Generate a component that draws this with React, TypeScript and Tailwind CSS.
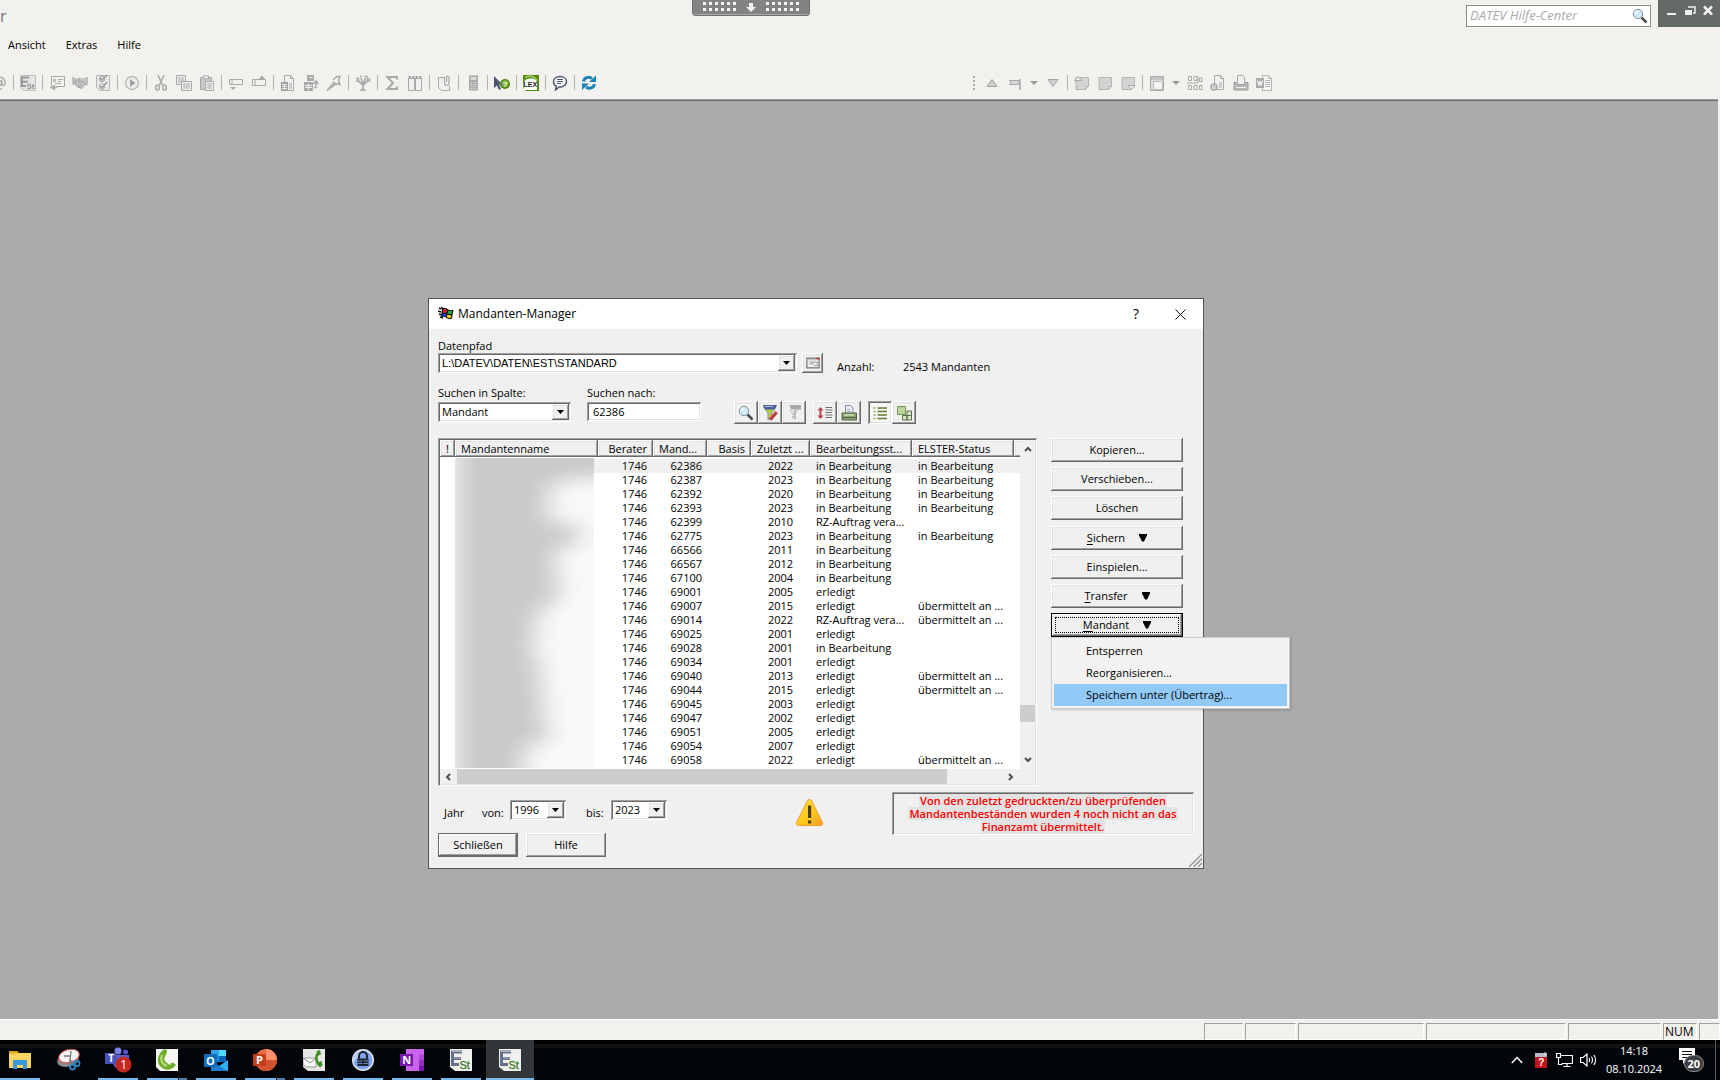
import React, { useState } from 'react';

const raised = 'bg-[#f0f0f0] shadow-[inset_-1px_-1px_#696969,inset_1px_1px_#fff,inset_-2px_-2px_#a0a0a0,inset_2px_2px_#e3e3e3]';
const sunken = 'shadow-[inset_1px_1px_#a0a0a0,inset_-1px_-1px_#fff,inset_2px_2px_#696969,inset_-2px_-2px_#e3e3e3]';

type Row = [mandant: string, jahr: string, status: string, elster: string];

const rows: Row[] = [
    ['62386', '2022', 'in Bearbeitung', 'in Bearbeitung'],
    ['62387', '2023', 'in Bearbeitung', 'in Bearbeitung'],
    ['62392', '2020', 'in Bearbeitung', 'in Bearbeitung'],
    ['62393', '2023', 'in Bearbeitung', 'in Bearbeitung'],
    ['62399', '2010', 'RZ-Auftrag vera...', ''],
    ['62775', '2023', 'in Bearbeitung', 'in Bearbeitung'],
    ['66566', '2011', 'in Bearbeitung', ''],
    ['66567', '2012', 'in Bearbeitung', ''],
    ['67100', '2004', 'in Bearbeitung', ''],
    ['69001', '2005', 'erledigt', ''],
    ['69007', '2015', 'erledigt', 'übermittelt an ...'],
    ['69014', '2022', 'RZ-Auftrag vera...', 'übermittelt an ...'],
    ['69025', '2001', 'erledigt', ''],
    ['69028', '2001', 'in Bearbeitung', ''],
    ['69034', '2001', 'erledigt', ''],
    ['69040', '2013', 'erledigt', 'übermittelt an ...'],
    ['69044', '2015', 'erledigt', 'übermittelt an ...'],
    ['69045', '2003', 'erledigt', ''],
    ['69047', '2002', 'erledigt', ''],
    ['69051', '2005', 'erledigt', ''],
    ['69054', '2007', 'erledigt', ''],
    ['69058', '2022', 'erledigt', 'übermittelt an ...'],
];

/* ---------- Icons ---------- */

const Icon: React.FC<{ children: React.ReactNode; className?: string; box?: string }> = ({
    children,
    className = 'h-4 w-4',
    box = '0 0 16 16',
}) => (
    <svg className={`shrink-0 ${className}`} viewBox={box} fill="none" aria-hidden="true">
        {children}
    </svg>
);

const G = '#a9a9a9';
const L = '#dcdbd9';

const AtIcon = () => (
    <Icon>
        <circle cx="8" cy="8" r="2.6" stroke={G} strokeWidth="1.4" />
        <path d="M10.8 5.4v4c0 2 3.4 1.7 3.4-1.6A6.3 6.3 0 1 0 11 13.6" stroke={G} strokeWidth="1.4" />
    </Icon>
);

const EstGrayIcon = () => (
    <Icon>
        <path d="M.5.5h15v15h-12l-3-3z" fill="#e6e5e3" stroke="#bdbdbd" />
        <path d="M9 2.500H2V11h4M2 6.700h6" stroke="#999" strokeWidth="2" />
        <text x="6.500" y="14" fontSize="8" fontWeight="700" fill="#8f8f8f" fontFamily="Liberation Sans">St</text>
    </Icon>
);

const FormIcon = () => (
    <Icon>
        <path d="M2.500 11V1.500h13v10H7" stroke={G} />
        <path d="M4.500 4.500h2v2h-2zM9 4.500h5M9 6.500h3M6 8.500h6" stroke={G} />
        <path d="M6 10v5l-5-2.500zM6 12.500h3" fill={G} stroke={G} strokeWidth=".6" />
    </Icon>
);

const HandshakeIcon = () => (
    <Icon>
        <path d="M1 2l3 1.500 3.500-1 4 1L15 2v8l-2 .5-3 4-2.500-1L3 10 1 9.500z" fill="#c4c4c4" />
        <path d="M1 2v7.500M15 2v8M4 4.500L3 9l4 4 1-1M7.500 3.500L6 7l2 .5 2-1.500 4 4M8 9l3 3M6 10l3 3" stroke="#9d9d9d" />
    </Icon>
);

const ChecklistIcon = () => (
    <Icon>
        <path d="M1.500.5h13v15h-10l-3-3z" fill="#ebeae8" stroke="#b5b5b5" />
        <circle cx="7" cy="4" r="2.700" stroke={G} />
        <circle cx="7" cy="11.500" r="2.700" stroke={G} />
        <path d="M5 3l2 2 5-5M5 11l2 2 5-6" stroke="#999" strokeWidth="1.500" />
    </Icon>
);

const PlayIcon = () => (
    <Icon>
        <circle cx="8" cy="8" r="6.500" fill="#eeedeb" stroke="#bcbcbc" strokeWidth="1.400" />
        <path d="M6 4l5.500 4L6 12z" fill="#a0a0a0" />
    </Icon>
);

const CutIcon = () => (
    <Icon>
        <path d="M5 0l4.500 10M11 0L6.500 10" stroke={G} strokeWidth="1.500" />
        <ellipse cx="4.500" cy="12.500" rx="1.800" ry="2.500" stroke={G} strokeWidth="1.500" />
        <ellipse cx="11.500" cy="12.500" rx="1.800" ry="2.500" stroke={G} strokeWidth="1.500" />
    </Icon>
);

const CopyIcon = () => (
    <Icon>
        <path d="M.5.5h9v9h-9z" fill="#f1f0ee" stroke={G} />
        <path d="M2 3h6M2 5h6M2 7h4" stroke={G} />
        <path d="M5.500 6.500h10v9h-10z" fill="#f1f0ee" stroke={G} />
        <path d="M7 9h7M7 11h7M7 13h7" stroke={G} />
    </Icon>
);

const PasteIcon = () => (
    <Icon>
        <path d="M1.500 2.500h11v12h-11z" fill="#c8c8c8" stroke={G} />
        <path d="M4.500.8h5v3h-5z" fill="#eee" stroke={G} />
        <path d="M6.500 6.500h8v9h-8z" fill="#f1f0ee" stroke={G} />
        <path d="M8 9h5M8 11h5M8 13h5" stroke={G} />
    </Icon>
);

const RowDownIcon = () => (
    <Icon>
        <path d="M1.500 4.500h13v5h-13z" stroke={G} />
        <path d="M4 5v4" stroke={G} />
        <path d="M2 12h6l-3 3z" fill={G} />
    </Icon>
);

const RowUpIcon = () => (
    <Icon>
        <path d="M1.500 4.500h13v6h-13z" stroke={G} />
        <path d="M4 5v5" stroke={G} />
        <path d="M8 4h6l-3-3.500z" fill={G} />
    </Icon>
);

const DocCalcIcon = () => (
    <Icon>
        <path d="M4.500.5h6l3 3v12h-9z" fill="#f1f0ee" stroke={G} />
        <path d="M10.500.5v3h3M9 9h3M9 11h3M9 13h3" stroke={G} />
        <path d="M1 7h7v9H1z" fill="#9f9f9f" />
        <path d="M2 9.500h5M2 11.500h5M2 13.500h5M4.500 9v6" stroke="#f1f0ee" />
    </Icon>
);

const DocTransferIcon = () => (
    <Icon>
        <path d="M1 7h9v9H1zM4 0h7v6H4z" fill={G} />
        <path d="M2 10.500h7M2 12.500h7M5.500 9v6M6 2.500h4" stroke="#f1f0ee" />
        <path d="M11 12.500h2V6M10.500 9L13 6l2.500 3" stroke={G} strokeWidth="1.500" />
    </Icon>
);

const WrenchIcon = () => (
    <Icon>
        <path d="M1 15.500l7-8 2 1.500z" fill="#c4c4c4" stroke={G} strokeWidth="1.300" />
        <path d="M7 5l4-3.500h3L12.500 5 14 9.500l-2-1-2.500 1" stroke={G} strokeWidth="1.500" />
    </Icon>
);

const TreeIcon = () => (
    <Icon>
        <path d="M8 16V8M8 10L3.500 6M8 10l5-4.500M8 8L6 3M9 8l1.500-5M3.500 6H1M3.500 6L3 2.500M13 5.500L12.500 2M13 5.500l2.500.5M5 15h6" stroke={G} strokeWidth="1.700" />
        <path d="M5 1.500h2M9.500 1.500h3M1 3.500h2M13.500 4h2" stroke={G} strokeWidth="1.500" />
    </Icon>
);

const SigmaIcon = () => (
    <Icon>
        <path d="M13 4.500V2H3.500L9 8l-5.500 6H13v-2.500" stroke={G} strokeWidth="2" />
    </Icon>
);

const ColumnsIcon = () => (
    <Icon>
        <path d="M1.500 3.500h6v12h-6zM8.500 3.500h6v12h-6z" fill="#f1f0ee" stroke={G} />
        <path d="M1.500 1h2.500v3H1.500zM5 1h2.500v3H5zM8.500 1H11v3H8.500zM12 1h2.500v3H12z" fill={G} />
    </Icon>
);

const ClipIcon = () => (
    <Icon>
        <path d="M8 2.500H2.500v10l3 3h8V11" fill="#f1f0ee" stroke={G} />
        <path d="M8.500 2v6a2 2 0 0 0 4.500 0V2a1.500 1.500 0 0 0-2.500 0v5" stroke={G} strokeWidth="1.200" />
    </Icon>
);

const CalculatorIcon = () => (
    <Icon>
        <path d="M4 .5h9v15H4z" fill={G} />
        <path d="M5.500 2h6v3h-6z" fill={L} />
        <path d="M5.500 7.500h6M5.500 9.500h6M5.500 11.500h6M5.500 13.500h6" stroke={L} strokeDasharray="1.500 .8" />
    </Icon>
);

const HelpCursorIcon = () => (
    <Icon>
        <path d="M0 1v12l3-2.500L5 15l2-1-2-4.500h3.500z" fill="#4d5470" />
        <circle cx="11" cy="9" r="5" fill="#4f8315" />
        <circle cx="11" cy="8.500" r="3.500" fill="#7fae38" />
        <text x="8.800" y="12" fontSize="8" fontWeight="700" fill="#fff" fontFamily="Liberation Sans">?</text>
    </Icon>
);

const LexIcon = () => (
    <Icon>
        <path d="M0 0h16v16H3l-3-3z" fill="#4f8a10" />
        <path d="M1 15C-.5 6 2 3.500 8 3.500S14.500 7 14 15z" fill="#fff" />
        <path d="M2 2.500Q10-1 14.500 6" stroke="#a4cc60" strokeWidth="1.500" />
        <text x=".5" y="12" fontSize="7" fontWeight="700" fill="#222" fontFamily="Liberation Sans">LEX</text>
    </Icon>
);

const ChatIcon = () => (
    <Icon>
        <path d="M8 1.500c4 0 6.500 2.200 6.500 5S12 12 8 12H7l-3.500 3 .8-3.800C2.500 10.300 1.500 8.500 1.500 6.500c0-2.800 2.500-5 6.500-5z" fill="#f8f8fa" stroke="#4d5470" strokeWidth="1.400" />
        <path d="M5 4.500h6M5 6.500h6M5 8.500h4" stroke="#4d5470" />
    </Icon>
);

const RefreshIcon = () => (
    <Icon>
        <path d="M2.500 6.500c.8-4 5-5.500 8.500-3" stroke="#1c83b8" strokeWidth="3" />
        <path d="M8 7h7V.5z" fill="#1c83b8" />
        <path d="M13.500 9c-.8 4-5 5.500-8.500 3" stroke="#1c83b8" strokeWidth="3" />
        <path d="M8 8.500H1V15z" fill="#1c83b8" />
    </Icon>
);

const UpIcon = () => (
    <Icon><path d="M3 11.500h10L8 4.500z" fill="#d0d0d0" stroke="#a5a5a5" /></Icon>
);
const DownIcon = () => (
    <Icon><path d="M3 4.500h10L8 11.500z" fill="#d0d0d0" stroke="#a5a5a5" /></Icon>
);
const FlagIcon = () => (
    <Icon>
        <path d="M13 4v11" stroke={G} strokeWidth="1.500" />
        <path d="M2 5.500h10v4H2L4.500 7.500z" fill="#d6d6d6" stroke={G} />
    </Icon>
);
const NoteIcon: React.FC<{ mark?: 'up' | 'down' }> = ({ mark }) => (
    <Icon>
        <path d="M2 2.500h12.500v9l-3 3H2z" fill="#d4d3d1" stroke="#b5b5b5" />
        <path d="M11.500 14.500v-3h3z" fill="#f0f0f0" stroke="#b5b5b5" />
        {mark === 'up' && <path d="M.5 5.500h7L4 1.500z" fill="#eee" stroke={G} />}
        {mark === 'down' && <path d="M8 10.500h7L11.500 14.500z" fill="#eee" stroke={G} />}
    </Icon>
);
const WindowPageIcon = () => (
    <Icon>
        <path d="M1.500 1.500h13v14h-13z" fill="#dddcda" stroke={G} />
        <path d="M2 3.500h12" stroke="#c4c4c4" strokeWidth="3" />
        <path d="M4.500 6.500h7l2 2v6h-9z" fill="#f5f4f2" stroke="#bbb" />
    </Icon>
);
const GridIcon = () => (
    <Icon>
        <path d="M1.500 1.500h3v4h-3zM7 1.500h3v4H7zM12.500 3h2.500v3.500h-2.500zM1.500 10.500h3v4h-3zM7 10.500h3v4H7zM12.500 10.500h2.500v4h-2.500z" stroke={G} />
        <path d="M0 8h11V1" stroke={G} />
    </Icon>
);
const DocPreviewIcon = () => (
    <Icon>
        <path d="M4.500.5h6l3 3v11h-9z" fill="#f1f0ee" stroke={G} />
        <path d="M10.500.5v3h3M9 8h3M9 10h3M9 12h3" stroke={G} />
        <circle cx="4" cy="12" r="3" fill="#ddd" stroke={G} strokeWidth="1.500" />
        <path d="M4 10.500V12h1.500" stroke={G} />
    </Icon>
);
const PrinterGrayIcon = () => (
    <Icon>
        <path d="M4.500 8V.5h5l2 2V8" fill="#f1f0ee" stroke={G} />
        <path d="M1 7.500h3v2h8v-2h3v7.500H1z" fill="#b8b8b8" stroke="#9d9d9d" />
        <path d="M3 12.500h10" stroke="#eee" />
    </Icon>
);
const WordGrayIcon = () => (
    <Icon>
        <path d="M6.500.5h6l3 3v12h-9z" fill="#f6f5f3" stroke="#b5b5b5" />
        <path d="M9 5.500h5M9 7.500h5M9 9.500h5M9 11.500h5M12.500.5v3h3" stroke="#b5b5b5" />
        <path d="M0 3h8v10H0z" fill={G} />
        <path d="M1.500 5.500l1.300 5L4 6l1.200 4.500 1.300-5" stroke="#fff" />
    </Icon>
);

const MagnifierIcon = () => (
    <Icon>
        <path d="M9.500 9.500l5 5" stroke="#4b4b4b" strokeWidth="2.500" />
        <circle cx="6" cy="6" r="4.700" fill="#d4ecf9" stroke="#7d8fa0" />
        <path d="M3.500 6A2.500 2.500 0 0 1 6 3.500" stroke="#fff" strokeWidth="1.500" />
    </Icon>
);
const FilterEditIcon = () => (
    <Icon>
        <path d="M1.500 2h12L9.500 8v5L6 15V8z" fill="#b9ce3c" stroke="#8b95a5" />
        <path d="M1 0h14l-2 4.500H3z" fill="#4b5f96" />
        <path d="M3 1.500h8" stroke="#aebde0" />
        <path d="M14.500 7L8 14.500" stroke="#b33a3e" strokeWidth="3.500" />
        <path d="M13.500 6.500L7 13.500" stroke="#e49a9a" />
    </Icon>
);
const FilterGrayIcon = () => (
    <Icon>
        <path d="M3.500 0H15v4.500H5z" fill="#a6a6a6" />
        <path d="M8 5h4l-2 3v7L8 13.500z" fill="#bcbcbc" />
        <path d="M3 5l3.500 3.500V14M5 4.500L7.500 8v6" stroke="#b4b4b4" strokeDasharray="1.500 1" />
    </Icon>
);
const SortIcon = () => (
    <Icon>
        <path d="M3.500 3v10" stroke="#b8464c" strokeWidth="2" />
        <path d="M.5 5.500l3-3.500 3 3.500zM.5 10.500l3 3.500 3-3.500z" fill="#b8464c" />
        <path d="M8.500 2.500H15M8.500 5h7M8.500 7.500H15M8.500 10h7M8.500 12.500H15" stroke="#707070" />
    </Icon>
);
const PrinterIcon = () => (
    <Icon>
        <path d="M4.500 8V.5h5l2.500 2.500v5" fill="#eef0f6" stroke="#7d8aa5" />
        <path d="M6 4.500h3M6 6.500h4" stroke="#98a4bb" />
        <path d="M1 8h14.500v7H1z" fill="#8da577" stroke="#4d633d" />
        <path d="M3 10h10" stroke="#cfe0bd" strokeWidth="1.500" />
        <path d="M1 12.500h14" stroke="#4d633d" />
    </Icon>
);
const ListIcon = () => (
    <Icon>
        <path d="M5.500 3H15M5.500 6.500H15M5.500 10H15M5.500 13.500H15" stroke="#617f32" strokeWidth="1.700" />
        <path d="M1.500 3h2M1.500 6.500h2M1.500 10h2M1.500 13.500h2" stroke="#8dae56" strokeWidth="1.700" />
    </Icon>
);
const TilesIcon = () => (
    <Icon>
        <path d="M1.500 1.500h8v8h-8z" fill="#bcd69a" stroke="#77945a" />
        <path d="M6.500 10.500h4.500v4.500H6.500zM11 10.500h4.500v4.500H11zM11 6h4.500v4.500H11z" fill="#d8e5c4" stroke="#596f49" />
    </Icon>
);
const PathIcon = () => (
    <Icon className="h-[14px] w-[14px]">
        <path d="M1 2.500h14v11H1z" fill="#f1f1f1" stroke="#777" strokeWidth="1.400" />
        <path d="M2 4.200h10" stroke="#c4c4c4" strokeWidth="1.500" />
        <path d="M12 2h3.500v2H12z" fill="#c8323c" />
        <path d="M4 7h9v4M4 9h5M9 11h4" stroke="#8e8e8e" />
    </Icon>
);

const WindowsFlagIcon = () => (
    <Icon>
        <path d="M1 2l2 1M0 5l3 1M1 8l3 1M2 11l3 1M3 1.500l2 1" stroke="#111" strokeWidth="1.500" />
        <path d="M4 2.500Q7 1 9.500 3t6 .5l-1.500 9q-3 1.500-5.500-.5T3 11.500z" fill="#111" />
        <path d="M5.500 3.500Q7.500 2.500 9 4l-.6 3Q6.500 6 4.800 6.700z" fill="#e8202a" />
        <path d="M10.200 4.500q2 1 4 .3l-.6 3q-2 .6-4-.4z" fill="#22a83a" />
        <path d="M4.600 7.800q2-.8 3.700.3l-.5 2.700q-2-1-3.700-.2z" fill="#2238d8" />
        <path d="M9.400 8.600q2 1 4 .4l-.5 2.700q-2 .6-4-.4z" fill="#f5d516" />
    </Icon>
);

const WarningIcon = () => (
    <Icon className="h-[29px] w-[29px]" box="0 0 29 29">
        <defs>
            <linearGradient id="warn" x1="0" y1="0" x2="1" y2="1">
                <stop offset="0" stopColor="#ffe14a" />
                <stop offset=".55" stopColor="#fdca1a" />
                <stop offset="1" stopColor="#f29a2c" />
            </linearGradient>
        </defs>
        <path d="M14.500 1.500c1 0 1.700.5 2.200 1.400l10.800 21.600c.7 1.600-.2 3-2 3h-22c-1.800 0-2.700-1.400-2-3L12.300 2.900c.5-.9 1.200-1.400 2.200-1.400z" fill="url(#warn)" stroke="#f0a030" />
        <path d="M13 7.500h3.200v12.500H13zM13 22.500h3.200v3H13z" fill="#4f4208" />
    </Icon>
);

const DropArrow = () => (
    <Icon className="h-1 w-[7px]" box="0 0 7 4"><path d="M0 0h7L3.500 4z" fill="#000" /></Icon>
);
const GrayDrop = () => (
    <button type="button" aria-label="Auswahl" className="flex w-[15px] items-center justify-center">
        <Icon className="h-1 w-2" box="0 0 8 4"><path d="M0 0h8L4 4z" fill="#999" /></Icon>
    </button>
);
const BlackDrop = () => (
    <Icon className="ml-[14px] h-2 w-2" box="0 0 8 8"><path d="M0 0h8v1.500L5 7.500H3L0 1.500z" fill="#000" /></Icon>
);
const Chevron: React.FC<{ d: string }> = ({ d }) => (
    <Icon className="h-2 w-2" box="0 0 8 8"><path d={d} stroke="#505050" strokeWidth="2" /></Icon>
);
const Dots = () => (
    <Icon className="h-[9px] w-[33px]" box="0 0 33 9">
        <path d="M0 1.500h33M0 7.500h33" stroke="#f5f5f5" strokeWidth="3" strokeDasharray="3 3" />
    </Icon>
);

/* ---------- Small parts ---------- */

const ToolButton: React.FC<{ label: string; children: React.ReactNode }> = ({ label, children }) => (
    <button type="button" aria-label={label} className="flex w-[23px] shrink-0 items-center justify-center">
        {children}
    </button>
);

const Sep = () => <span className="mr-[2px] ml-[3px] h-[15px] w-px shrink-0 bg-[#b4b3b1]" />;

interface ComboProps {
    id: string;
    options: string[];
    className: string;
}

const Combo: React.FC<ComboProps> = ({ id, options, className }) => (
    <div className={`relative flex h-5 bg-white p-[2px] ${sunken} ${className}`}>
        <select id={id} className="min-w-0 flex-1 appearance-none bg-white pl-[2px] leading-4 outline-none">
            {options.map((o) => (
                <option key={o}>{o}</option>
            ))}
        </select>
        <span className={`pointer-events-none flex w-[17px] items-center justify-center ${raised}`}>
            <DropArrow />
        </span>
    </div>
);

const IconButton: React.FC<{ label: string; pressed?: boolean; children: React.ReactNode }> = ({ label, pressed, children }) => (
    <button
        type="button"
        aria-label={label}
        className={`flex h-[23px] w-6 items-center justify-center ${pressed ? `bg-[#f7f7f7] ${sunken}` : raised}`}
    >
        {children}
    </button>
);

const SideButton: React.FC<{ text: string; hotkey?: boolean }> = ({ text, hotkey }) => (
    <button type="button" className={`flex h-6 w-full items-center justify-center ${raised}`}>
        {hotkey ? (
            <>
                <span><u className="underline-offset-2">{text[0]}</u>{text.slice(1)}</span>
                <BlackDrop />
            </>
        ) : (
            text
        )}
    </button>
);

/* ---------- Application frame ---------- */

const TopBar = () => (
    <header className="relative shrink-0 bg-[#f3f1ed]">
        <div className="absolute top-0 left-[692px] flex h-4 w-[118px] items-start justify-center gap-[10px] rounded-b border border-t-0 border-[#6f6f6f] bg-[#838383] pt-[2px] shadow-[inset_0_-1px_#aaa]">
            <Dots />
            <Icon className="mt-px h-[9px] w-[10px]" box="0 0 10 9"><path d="M3 0h4v4h3L5 9 0 4h3z" fill="#f2f2f2" /></Icon>
            <Dots />
        </div>
        <div className="flex h-[30px] items-start justify-between">
            <span className="mt-1 text-base leading-6 text-[#73737d]">r</span>
            <div className="flex">
                <div className="mt-[5px] mr-[7px] flex h-[22px] w-[185px] items-center border border-[#8c8c8c] bg-white pr-[2px] pl-[3px]">
                    <input
                        type="text"
                        aria-label="DATEV Hilfe-Center"
                        placeholder="DATEV Hilfe-Center"
                        className="min-w-0 flex-1 text-[13px] italic outline-none placeholder:text-[#a9a9a9]"
                    />
                    <MagnifierIcon />
                </div>
                <div className="flex h-[27px] w-[62px] justify-between bg-[#646b67] pt-[5px] pr-[6px] pl-[8px]">
                    <button type="button" aria-label="Minimieren" className="flex h-3 w-3">
                        <Icon className="h-3 w-3" box="0 0 12 12"><path d="M1 9h9" stroke="#f0f0f0" strokeWidth="2" /></Icon>
                    </button>
                    <button type="button" aria-label="Wiederherstellen" className="flex h-3 w-3">
                        <Icon className="h-3 w-3" box="0 0 12 12">
                            <path d="M4 2h7v6H9" stroke="#f0f0f0" strokeWidth="1.500" />
                            <path d="M1 5h7v5H1z" fill="#f0f0f0" />
                        </Icon>
                    </button>
                    <button type="button" aria-label="Schließen" className="flex h-3 w-3">
                        <Icon className="h-3 w-3" box="0 0 12 12"><path d="M2 1.500l8 8M10 1.500l-8 8" stroke="#f0f0f0" strokeWidth="2.500" /></Icon>
                    </button>
                </div>
            </div>
        </div>
        <nav className="flex h-[30px] items-center gap-5 pl-2 text-[11px]">
            <button type="button">Ansicht</button>
            <button type="button">Extras</button>
            <button type="button">Hilfe</button>
        </nav>
        <div className="mt-[7px] mb-px flex h-[31px] items-center overflow-hidden">
            <div className="-ml-[13px] flex items-center">
                <ToolButton label="E-Mail"><AtIcon /></ToolButton>
                <Sep />
                <ToolButton label="ESt"><EstGrayIcon /></ToolButton>
                <Sep />
                <ToolButton label="Formular"><FormIcon /></ToolButton>
                <ToolButton label="Übergabe"><HandshakeIcon /></ToolButton>
                <ToolButton label="Prüfen"><ChecklistIcon /></ToolButton>
                <Sep />
                <ToolButton label="Start"><PlayIcon /></ToolButton>
                <Sep />
                <ToolButton label="Ausschneiden"><CutIcon /></ToolButton>
                <ToolButton label="Kopieren"><CopyIcon /></ToolButton>
                <ToolButton label="Einfügen"><PasteIcon /></ToolButton>
                <Sep />
                <ToolButton label="Zeile darunter"><RowDownIcon /></ToolButton>
                <ToolButton label="Zeile darüber"><RowUpIcon /></ToolButton>
                <Sep />
                <ToolButton label="Berechnung"><DocCalcIcon /></ToolButton>
                <ToolButton label="Übernahme"><DocTransferIcon /></ToolButton>
                <ToolButton label="Werkzeug"><WrenchIcon /></ToolButton>
                <Sep />
                <ToolButton label="Baum"><TreeIcon /></ToolButton>
                <Sep />
                <ToolButton label="Summe"><SigmaIcon /></ToolButton>
                <ToolButton label="Vergleich"><ColumnsIcon /></ToolButton>
                <Sep />
                <ToolButton label="Anlage"><ClipIcon /></ToolButton>
                <Sep />
                <ToolButton label="Rechner"><CalculatorIcon /></ToolButton>
                <Sep />
                <ToolButton label="Direkthilfe"><HelpCursorIcon /></ToolButton>
                <Sep />
                <ToolButton label="LEXinform"><LexIcon /></ToolButton>
                <Sep />
                <ToolButton label="Kommentar"><ChatIcon /></ToolButton>
                <Sep />
                <ToolButton label="Aktualisieren"><RefreshIcon /></ToolButton>
            </div>
            <div className="ml-[373px] flex items-center">
                <span className="mr-[5px] h-[14px] border-l-2 border-dotted border-[#aaa]" />
                <ToolButton label="Vorheriges"><UpIcon /></ToolButton>
                <ToolButton label="Markierung"><FlagIcon /></ToolButton>
                <GrayDrop />
                <ToolButton label="Nächstes"><DownIcon /></ToolButton>
                <Sep />
                <ToolButton label="Notiz zurück"><NoteIcon mark="up" /></ToolButton>
                <ToolButton label="Notiz"><NoteIcon /></ToolButton>
                <ToolButton label="Notiz vor"><NoteIcon mark="down" /></ToolButton>
                <Sep />
                <ToolButton label="Ansicht"><WindowPageIcon /></ToolButton>
                <GrayDrop />
                <ToolButton label="Übersicht"><GridIcon /></ToolButton>
                <ToolButton label="Vorschau"><DocPreviewIcon /></ToolButton>
                <ToolButton label="Drucken"><PrinterGrayIcon /></ToolButton>
                <ToolButton label="Word"><WordGrayIcon /></ToolButton>
            </div>
        </div>
    </header>
);

const StatusBar = () => (
    <div className="flex h-[21px] shrink-0 justify-end gap-[2px] border-t border-white bg-[#f3f1ed] pt-[3px] text-xs">
        {['w-[39px]', 'w-[51px]', 'w-[126px]', 'w-[140px]', 'w-[93px]', 'w-[34px]', 'w-[21px]'].map((w, i) => (
            <div
                key={w}
                className={`${w} flex items-center border border-t-[#a0a0a0] border-r-white border-b-white border-l-[#a0a0a0] pl-px leading-4`}
            >
                {i === 5 && 'NUM'}
            </div>
        ))}
    </div>
);

/* ---------- Mandanten-Manager ---------- */

const columns = [
    { title: '!', width: 'w-[15px]', cls: 'text-center' },
    { title: 'Mandantenname', width: 'w-[143px]', cls: 'pl-[6px] text-left' },
    { title: 'Berater', width: 'w-[55px]', cls: 'pr-[6px] text-right' },
    { title: 'Mand...', width: 'w-[54px]', cls: 'pl-[6px] text-left' },
    { title: 'Basis', width: 'w-[44px]', cls: 'pr-[6px] text-right' },
    { title: 'Zuletzt ...', width: 'w-[59px]', cls: 'pl-[6px] text-left' },
    { title: 'Bearbeitungsst...', width: 'w-[102px]', cls: 'pl-[6px] text-left' },
    { title: 'ELSTER-Status', width: 'w-[102px]', cls: 'pl-[6px] text-left' },
    { title: '', width: 'w-auto', cls: '-mr-1' },
];

const NameMask = () => (
    <svg className="absolute top-[18px] left-[15px] h-[310px] w-[139px]" viewBox="0 0 139 310" aria-hidden="true">
        <defs>
            <filter id="soft" x="-30%" y="-20%" width="160%" height="140%">
                <feGaussianBlur stdDeviation="13 9" />
            </filter>
        </defs>
        <rect width="139" height="310" fill="#f9f9f9" />
        <path
            d="M2-30H180V14L96 24 90 62 124 68 124 84 98 92 104 142 82 152 76 195 84 205 88 262 96 280 70 288 64 340H2z"
            fill="#cac8c9"
            filter="url(#soft)"
        />
        <path d="M-20 314h180" stroke="#aaa" strokeWidth="10" filter="url(#soft)" />
    </svg>
);

const ClientTable = () => (
    <div className={`flex h-[348px] w-[599px] shrink-0 flex-col bg-white p-[2px] ${sunken}`}>
        <div className="flex flex-1">
            <div className="relative flex-1 overflow-hidden">
                <table className="w-full table-fixed border-collapse">
                    <thead>
                        <tr>
                            {columns.map((c) => (
                                <th key={c.title} className={`${c.width} p-0 pb-[2px] font-normal`}>
                                    <div className={`h-[17px] truncate leading-[17px] ${raised} ${c.cls}`}>{c.title}</div>
                                </th>
                            ))}
                        </tr>
                    </thead>
                    <tbody className="leading-[14px]">
                        {rows.map(([mandant, jahr, status, elster], i) => (
                            <tr key={mandant} className={i === 0 ? 'h-[14px] bg-[#f0f0f0]' : 'h-[14px]'}>
                                <td className="bg-white p-0" />
                                <td className="p-0" />
                                <td className="p-0 pr-[6px] text-right">1746</td>
                                <td className="p-0 pr-[5px] text-right">{mandant}</td>
                                <td className="p-0" />
                                <td className="p-0 text-center">{jahr}</td>
                                <td className="p-0 pl-[6px] whitespace-nowrap">{status}</td>
                                <td className="p-0 pl-[6px] whitespace-nowrap">{elster}</td>
                                <td className="p-0" />
                            </tr>
                        ))}
                    </tbody>
                </table>
                <NameMask />
            </div>
            <div className="flex w-[15px] flex-col items-center bg-[#f0f0f0] py-[5px]">
                <Chevron d="M1 6l3-3 3 3" />
                <div className="mt-[252px] h-[17px] w-full bg-[#cdcdcd]" />
                <div className="flex-1" />
                <Chevron d="M1 2l3 3 3-3" />
            </div>
        </div>
        <div className="flex h-[15px] items-center bg-[#f0f0f0] pr-5 pl-1">
            <Chevron d="M6 1L3 4l3 3" />
            <div className="ml-[5px] h-full w-[490px] bg-[#cdcdcd]" />
            <div className="flex-1" />
            <Chevron d="M2 1l3 3-3 3" />
        </div>
    </div>
);

const MandantMenu = () => {
    const [active, setActive] = useState(2);
    return (
        <div role="menu" className="absolute top-full left-0 z-10 w-[239px] border border-[#ccc] bg-[#f2f2f2] p-[2px] shadow-[1px_1px_2px_#0003]">
            {['Entsperren', 'Reorganisieren...', 'Speichern unter (Übertrag)...'].map((item, i) => (
                <button
                    key={item}
                    type="button"
                    role="menuitem"
                    onMouseEnter={() => setActive(i)}
                    className={`block h-[22px] w-full pl-8 text-left ${active === i ? 'bg-[#91c9f7]' : ''}`}
                >
                    {item}
                </button>
            ))}
        </div>
    );
};

const notice = [
    'Von den zuletzt gedruckten/zu überprüfenden',
    'Mandantenbeständen wurden 4 noch nicht an das',
    'Finanzamt übermittelt.',
];

const MandantenManager = () => {
    const [search, setSearch] = useState('62386');

    return (
        <section
            role="dialog"
            aria-label="Mandanten-Manager"
            className="absolute top-[198px] left-[428px] w-[776px] border border-[#555] bg-[#f0f0f0] text-[11px] leading-[14px]"
        >
            <div className="flex h-[30px] items-center bg-white pr-[17px] pl-[9px]">
                <WindowsFlagIcon />
                <h1 className="ml-1 flex-1 text-[12px]">Mandanten-Manager</h1>
                <button type="button" aria-label="Hilfe" className="mr-9 text-sm">?</button>
                <button type="button" aria-label="Schließen">
                    <Icon className="h-[11px] w-[11px]" box="0 0 11 11"><path d="M.5.5l10 10M10.500.5l-10 10" stroke="#111" /></Icon>
                </button>
            </div>

            <div className="px-[9px] pt-[10px] pb-[11px]">
                <div className="flex items-end">
                    <div className="w-[359px]">
                        <label htmlFor="pfad" className="block">Datenpfad</label>
                        <Combo id="pfad" options={['L:\\DATEV\\DATEN\\EST\\STANDARD']} className="font-['Liberation_Sans',sans-serif]" />
                    </div>
                    <button type="button" aria-label="Datenpfad wählen" className={`ml-[5px] flex h-5 w-[21px] items-center justify-center ${raised}`}>
                        <PathIcon />
                    </button>
                    <span className="ml-[14px] w-[66px] leading-3">Anzahl:</span>
                    <span className="leading-3">2543 Mandanten</span>
                </div>

                <div className="mt-[13px] flex h-[38px]">
                    <div className="w-[149px]">
                        <label htmlFor="spalte" className="mb-[2px] block">Suchen in Spalte:</label>
                        <Combo id="spalte" options={['Mandant', 'Berater', 'Mandantenname']} className="w-[133px]" />
                    </div>
                    <div className="w-[147px]">
                        <label htmlFor="suche" className="mb-[2px] block">Suchen nach:</label>
                        <input
                            id="suche"
                            type="text"
                            value={search}
                            onChange={(e) => setSearch(e.target.value)}
                            className={`block h-[19px] w-[114px] bg-white px-[6px] outline-none ${sunken}`}
                        />
                    </div>
                    <div className="flex items-end gap-[7px]">
                        <div className="flex">
                            <IconButton label="Suchen"><MagnifierIcon /></IconButton>
                            <IconButton label="Filter bearbeiten"><FilterEditIcon /></IconButton>
                            <IconButton label="Filter aufheben"><FilterGrayIcon /></IconButton>
                        </div>
                        <div className="flex">
                            <IconButton label="Sortieren"><SortIcon /></IconButton>
                            <IconButton label="Drucken"><PrinterIcon /></IconButton>
                        </div>
                        <div className="flex">
                            <IconButton label="Liste" pressed><ListIcon /></IconButton>
                            <IconButton label="Kacheln"><TilesIcon /></IconButton>
                        </div>
                    </div>
                </div>

                <div className="mt-[14px] flex gap-[14px]">
                    <ClientTable />
                    <div className="w-[132px]">
                        <div className="flex flex-col gap-[5px]">
                            <SideButton text="Kopieren..." />
                            <SideButton text="Verschieben..." />
                            <SideButton text="Löschen" />
                        </div>
                        <div className="mt-[6px] flex flex-col gap-[5px]">
                            <SideButton text="Sichern" hotkey />
                            <SideButton text="Einspielen..." />
                            <SideButton text="Transfer" hotkey />
                            <div className="relative">
                                <button
                                    type="button"
                                    aria-haspopup="menu"
                                    aria-expanded="true"
                                    className="h-6 w-full border border-black bg-[#f0f0f0] p-[3px] shadow-[inset_-1px_-1px_#696969,inset_1px_1px_#fff,inset_-2px_-2px_#a0a0a0]"
                                >
                                    <span className="flex h-full items-center justify-center border border-dotted border-black">
                                        <span><u className="underline-offset-2">M</u>andant</span>
                                        <BlackDrop />
                                    </span>
                                </button>
                                <MandantMenu />
                            </div>
                        </div>
                    </div>
                </div>

                <div className="mt-[6px] flex items-start">
                    <div className="w-[357px] pt-2">
                        <div className="flex items-end pl-[6px]">
                            <span className="w-[38px]">Jahr</span>
                            <label htmlFor="von" className="w-7">von:</label>
                            <Combo id="von" options={['1996']} className="w-14" />
                            <label htmlFor="bis" className="ml-5 w-[25px]">bis:</label>
                            <Combo id="bis" options={['2023']} className="w-14" />
                        </div>
                        <div className="mt-[13px] flex gap-2">
                            <button
                                type="button"
                                className="h-6 w-20 border border-[#696969] bg-[#f0f0f0] shadow-[inset_-1px_-1px_#696969,inset_1px_1px_#fff,inset_-2px_-2px_#a0a0a0]"
                            >
                                Schließen
                            </button>
                            <button type="button" className={`h-6 w-20 ${raised}`}>Hilfe</button>
                        </div>
                    </div>
                    <div className="pt-[6px]"><WarningIcon /></div>
                    <div className={`ml-auto h-[43px] w-[302px] pt-[2px] leading-[13px] font-semibold text-[#f00] ${sunken}`}>
                        {notice.map((line) => (
                            <p key={line} className="mx-auto w-fit bg-[#e3e3e3] px-px whitespace-nowrap">{line}</p>
                        ))}
                    </div>
                </div>
            </div>
            <svg className="absolute right-px bottom-px h-[13px] w-[13px]" viewBox="0 0 13 13" aria-hidden="true">
                <path d="M0 13L13 0M4.500 13L13 4.500M9 13l4-4" stroke="#8f8f8f" strokeWidth="1.300" />
            </svg>
        </section>
    );
};

/* ---------- Taskbar ---------- */

const EstIcon = () => (
    <Icon className="h-[22px] w-[22px]" box="0 0 22 22">
        <path d="M0 0h22v22H5l-5-4z" fill="#f0f0ee" />
        <path d="M12 3H2.500v12.500H9M2 9.500h9" stroke="#66718c" strokeWidth="3" />
        <path d="M12 2.500H2M11 9H4" stroke="#a9b1c4" />
        <text x="9.500" y="19.500" fontSize="11" fill="#3a7a28" stroke="#3a7a28" strokeWidth=".3" fontFamily="Liberation Sans">St</text>
    </Icon>
);

const apps: { name: string; state: 'none' | 'open' | 'multi' | 'active'; icon: React.ReactNode }[] = [
    {
        name: 'Explorer',
        state: 'open',
        icon: (
            <Icon className="h-[22px] w-[22px]" box="0 0 22 22">
                <path d="M0 2h8l2 2h12v15H0z" fill="#fcd462" />
                <path d="M0 2h8l1.500 2.500H0z" fill="#e0a21a" />
                <path d="M4 20v-8q0-1 1-1h12q1 0 1 1v8h-4v-4H8v4z" fill="#3b97dd" />
            </Icon>
        ),
    },
    {
        name: 'Snipping Tool',
        state: 'none',
        icon: (
            <Icon className="h-6 w-6" box="0 0 24 24">
                <ellipse cx="11" cy="12" rx="11" ry="6.500" transform="rotate(-15 11 12)" fill="#8c8c8c" />
                <ellipse cx="12" cy="8" rx="10.500" ry="6.500" transform="rotate(-15 12 8)" fill="#f4f4f4" stroke="#d04848" />
                <path d="M7 8h6M14 3l-1 10 3 4M12 12l8 3" stroke="#777" strokeWidth="1.300" />
                <circle cx="15.500" cy="19" r="2.500" stroke="#2f87c6" strokeWidth="1.800" />
                <circle cx="20" cy="15.500" r="2.500" stroke="#2f87c6" strokeWidth="1.800" />
            </Icon>
        ),
    },
    {
        name: 'Teams',
        state: 'open',
        icon: (
            <Icon className="h-[26px] w-[27px]" box="0 0 27 26">
                <circle cx="13" cy="4" r="3.500" fill="#7b83eb" />
                <circle cx="20.500" cy="5" r="2.500" fill="#5059c9" />
                <path d="M8 8h16v8q-1 6-8 6t-8-6z" fill="#5b63d3" />
                <path d="M0 6h12v11H0z" fill="#4b53bc" />
                <text x="3.200" y="15" fontSize="10" fontWeight="700" fill="#fff" fontFamily="Open Sans">T</text>
                <circle cx="18.500" cy="17.500" r="8" fill="#c4281e" />
                <text x="15.200" y="22" fontSize="12" fill="#fff" fontFamily="Open Sans">1</text>
            </Icon>
        ),
    },
    {
        name: 'Telefonie',
        state: 'multi',
        icon: (
            <Icon className="h-[22px] w-[22px]" box="0 0 22 22">
                <path d="M0 0h22v22H4l-4-4z" fill="#f5f5f2" />
                <path d="M8 0C2 5 0 12 4 17c4 5 12 5 16-1-3-3-5-3-6 0-2-1-5-3-6-6 1-3 3-5 3-9z" fill="#6fae2c" />
                <path d="M6 6c-2 5 0 9 5 11" stroke="#b8df7c" strokeWidth="2" />
            </Icon>
        ),
    },
    {
        name: 'Outlook',
        state: 'open',
        icon: (
            <Icon className="h-[22px] w-6" box="0 0 24 22">
                <path d="M7 1h15v12H7z" fill="#1490df" />
                <path d="M15 1h7v6h-7z" fill="#50d9ff" />
                <path d="M7 1h8v6H7z" fill="#28a8ea" />
                <path d="M15 7h7v6h-7z" fill="#0364b8" />
                <path d="M7 12l8 5 9-6v11H7z" fill="#2fb2f0" />
                <path d="M7 12l17 10H7z" fill="#1a7fd0" />
                <path d="M0 5h13v13H0z" fill="#0f6cbd" />
                <text x="2" y="15.500" fontSize="11" fontWeight="700" fill="#fff" fontFamily="Open Sans">O</text>
            </Icon>
        ),
    },
    {
        name: 'PowerPoint',
        state: 'multi',
        icon: (
            <Icon className="h-[22px] w-6" box="0 0 24 22">
                <circle cx="13" cy="11" r="11" fill="#ed6c47" />
                <path d="M13 0a11 11 0 0 1 11 11H13z" fill="#ff8f6b" />
                <path d="M2 11h22a11 11 0 0 1-22 0z" fill="#d35230" />
                <path d="M0 5h13v12H0z" fill="#c43e1c" />
                <text x="3" y="15" fontSize="11" fontWeight="700" fill="#fff" fontFamily="Open Sans">P</text>
            </Icon>
        ),
    },
    {
        name: 'Post',
        state: 'open',
        icon: (
            <Icon className="h-[22px] w-[22px]" box="0 0 22 22">
                <path d="M0 0h22v22H5l-5-4z" fill="#e6e6e4" />
                <path d="M0 9h13v9H3l-3-2z" fill="#fafafa" stroke="#999" />
                <path d="M0 9l7 5 6-5" stroke="#888" />
                <path d="M16 3q-4 4-2 9t4 5" stroke="#3f8f26" strokeWidth="2.500" />
                <path d="M13.500 2.500L17 1l1 4.500-3.500 1.500zM15 13.500l3.500-1.500 1 4.500-3 1.500z" fill="#3f8f26" />
            </Icon>
        ),
    },
    {
        name: 'KeePass',
        state: 'open',
        icon: (
            <Icon className="h-[22px] w-[22px]" box="0 0 22 22">
                <circle cx="11" cy="11" r="10.300" fill="#7ea3ee" stroke="#e8ecf6" strokeWidth="1.400" />
                <path d="M11 1.500A9.500 9.500 0 0 0 2 13z" fill="#bcd0f8" />
                <path d="M7 9.500V7a4 4 0 0 1 8 0v2.500" stroke="#1c2330" strokeWidth="2" />
                <path d="M5.500 9.500h11V17h-11z" fill="#1c2330" />
                <path d="M5.500 12h11M5.500 14.500h11" stroke="#6f88b8" />
                <path d="M10 11.500h2v3h-2z" fill="#1c2330" />
            </Icon>
        ),
    },
    {
        name: 'OneNote',
        state: 'open',
        icon: (
            <Icon className="h-[22px] w-6" box="0 0 24 22">
                <path d="M6 0h18v22H6z" fill="#ca64ea" />
                <path d="M19 5.500h5V11h-5z" fill="#ae4bd5" />
                <path d="M19 11h5v5.500h-5z" fill="#9332bf" />
                <path d="M19 16.500h5V22h-5z" fill="#7719aa" />
                <path d="M0 5h13v12H0z" fill="#7719aa" />
                <text x="2.300" y="15" fontSize="11" fontWeight="700" fill="#fff" fontFamily="Open Sans">N</text>
            </Icon>
        ),
    },
    { name: 'Einkommensteuer', state: 'open', icon: <EstIcon /> },
    { name: 'Einkommensteuer', state: 'active', icon: <EstIcon /> },
];

const Taskbar = () => (
    <footer className="flex h-10 shrink-0 justify-between border-t-4 border-black bg-[#01050a] text-white shadow-[inset_0_4px_#101112]">
        <div className="-mt-1 flex h-10 gap-[9px]">
            {apps.map((app, i) => (
                <button
                    key={i}
                    type="button"
                    aria-label={app.name}
                    className={`relative flex h-10 items-center justify-center ${app.state === 'active' ? '-ml-1 w-12 bg-[#333639]' : 'w-10'}`}
                >
                    {app.icon}
                    {app.state !== 'none' && <span className="absolute inset-x-0 bottom-0 h-[2px] bg-[#76b9ed]" />}
                    {app.state === 'multi' && <span className="absolute right-0 bottom-0 h-[2px] w-[9px] border-l border-black bg-[#4f7fa5]" />}
                </button>
            ))}
        </div>
        <div className="-mt-1 flex items-center">
            <Icon className="h-2 w-3" box="0 0 12 8"><path d="M.8 7L6 1.500 11.200 7" stroke="#fff" strokeWidth="1.500" /></Icon>
            <Icon className="ml-3 h-4 w-3" box="0 0 12 16">
                <path d="M0 4h12v12H0z" fill="#c1121f" />
                <path d="M0 1h12v4H0z" fill="#b8bccb" />
                <path d="M10 0v4" stroke="#ddd" />
                <text x="3.300" y="14" fontSize="10" fontWeight="700" fill="#fff" fontFamily="Liberation Sans">?</text>
            </Icon>
            <Icon className="ml-[9px] h-4 w-[17px]" box="0 0 17 16">
                <path d="M5.500 3.500h11v8h-11M11 11.500v3M7.500 14.500h7M.5 1.500h4v4h-4zM2.500 5.500v7h4" stroke="#fff" strokeWidth="1.200" />
            </Icon>
            <Icon className="ml-[7px] h-4 w-[17px]" box="0 0 17 16">
                <path d="M.6 5.500h2.500L7 2v12l-3.900-3.500H.6z" stroke="#fff" strokeWidth="1.200" />
                <path d="M9 6q1.200 2 0 4M11.500 4.500q2 3.500 0 7M14 3q3 5 0 10" stroke="#fff" strokeWidth="1.100" />
            </Icon>
            <div className="ml-2 w-[58px] text-center text-[11px] leading-[18px]">
                <div>14:18</div>
                <div>08.10.2024</div>
            </div>
            <button type="button" aria-label="20 Benachrichtigungen" className="ml-4">
                <Icon className="h-[26px] w-[26px]" box="0 0 26 26">
                    <path d="M0 1h16v12H8l-4 4v-4H0z" fill="#fff" />
                    <path d="M3 4.500h10M3 7.500h10M3 10.500h6" stroke="#111" strokeWidth="1.200" />
                    <rect x="5.500" y="8.500" width="19" height="16" rx="8" fill="#3a3d40" stroke="#8c8e90" />
                    <text x="8.500" y="21" fontSize="11" fontWeight="700" fill="#fff" fontFamily="Open Sans">20</text>
                </Icon>
            </button>
            <span className="mr-1 ml-[10px] h-10 w-px bg-[#5a5c5e]" />
        </div>
    </footer>
);

const App: React.FC = () => {
    return (
        <div className="flex h-screen flex-col overflow-hidden bg-[#f3f1ed] font-['Open_Sans',sans-serif] text-black">
            <TopBar />
            <main className="relative mr-[2px] flex-1 border-t border-[#a0a0a0] bg-[#ababab] shadow-[inset_0_1px_#696969]">
                <MandantenManager />
            </main>
            <StatusBar />
            <Taskbar />
        </div>
    );
};

export default App;
